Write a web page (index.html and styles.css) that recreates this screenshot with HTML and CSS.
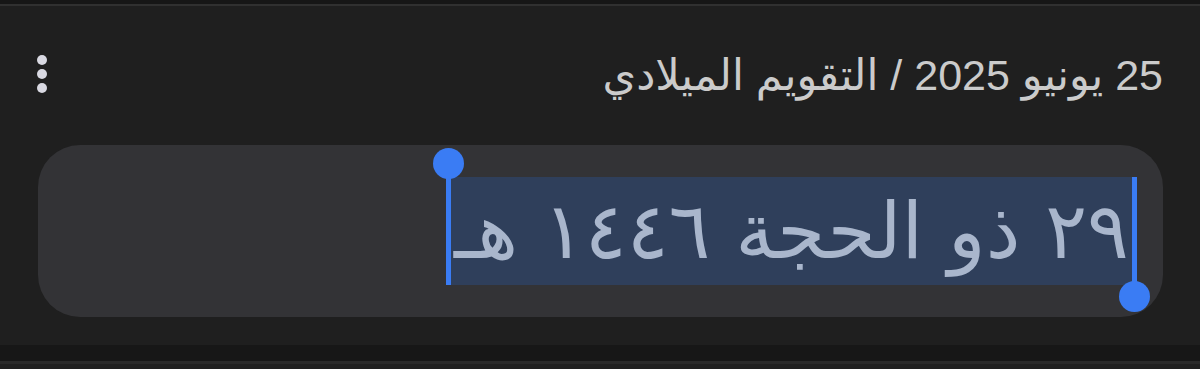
FILE: index.html
```html
<!DOCTYPE html>
<html lang="ar" dir="rtl">
<head>
  <meta charset="UTF-8" />
  <meta name="viewport" content="width=device-width, initial-scale=1.0"/>
  <title>التاريخ الهجري</title>
  <link rel="stylesheet" href="styles.css">
</head>
<body>
  <div class="top-strip"></div>

  <div class="card">
    <div class="card-header">
      <span class="date-title">25 يونيو 2025 / التقويم الميلادي</span>
      <button class="menu-button" aria-label="المزيد">
        <span class="dot"></span>
        <span class="dot"></span>
        <span class="dot"></span>
      </button>
    </div>

    <div class="field">
      <span class="selection">٢٩ ذو الحجة ١٤٤٦ هـ<span class="knob knob-top"></span><span class="knob knob-bottom"></span></span>
    </div>
  </div>

  <div class="bottom-strip"></div>
</body>
</html>
```

FILE: styles.css
```css
* {
  box-sizing: border-box;
  margin: 0;
  padding: 0;
}

html, body {
  height: 100%;
  overflow: hidden;
}

body {
  background: #202020;
  font-family: "Liberation Sans", "DejaVu Sans", sans-serif;
}

.top-strip {
  height: 6px;
  background: #161616;
  border-bottom: 2px solid #303030;
}

.card {
  background: #1f1f1f;
  padding: 0 37px 28px 38px;
}

.card-header {
  height: 139px;
  display: flex;
  align-items: center;
  justify-content: space-between;
}

.date-title {
  color: #cbcbcb;
  font-size: 43px;
  margin-top: -2px;
}

.menu-button {
  display: flex;
  flex-direction: column;
  gap: 4px;
  background: none;
  border: none;
  padding: 0;
  margin-left: -1px;
  margin-top: -4px;
  cursor: pointer;
}

.dot {
  width: 10px;
  height: 10px;
  border-radius: 50%;
  background: #d9d9e2;
}

.field {
  height: 172px;
  background: #333336;
  border-radius: 42px;
  display: flex;
  align-items: center;
  padding: 0 30px;
}

.selection {
  position: relative;
  display: inline-block;
  height: 108px;
  line-height: 108px;
  margin-top: -1px;
  padding: 0 4px;
  background: #2f3f5b;
  color: #a9b6cc;
  font-family: "DejaVu Sans", sans-serif;
  font-size: 78px;
  white-space: nowrap;
}

/* selection handles */
.selection::before,
.selection::after {
  content: '';
  position: absolute;
  width: 5px;
  top: 0;
  bottom: 0;
  background: #3a7cf4;
}

.selection::before {
  right: -4px;
}

.selection::after {
  left: -4px;
}

.knob {
  position: absolute;
  width: 31px;
  height: 31px;
  border-radius: 50%;
  background: #3a7cf4;
}

.knob-top {
  left: -17px;
  top: -29px;
}

.knob-bottom {
  right: -17px;
  bottom: -27px;
}

.bottom-strip {
  height: 19px;
  background: #171717;
  border-bottom: 3px solid #2a2a2a;
}
```
